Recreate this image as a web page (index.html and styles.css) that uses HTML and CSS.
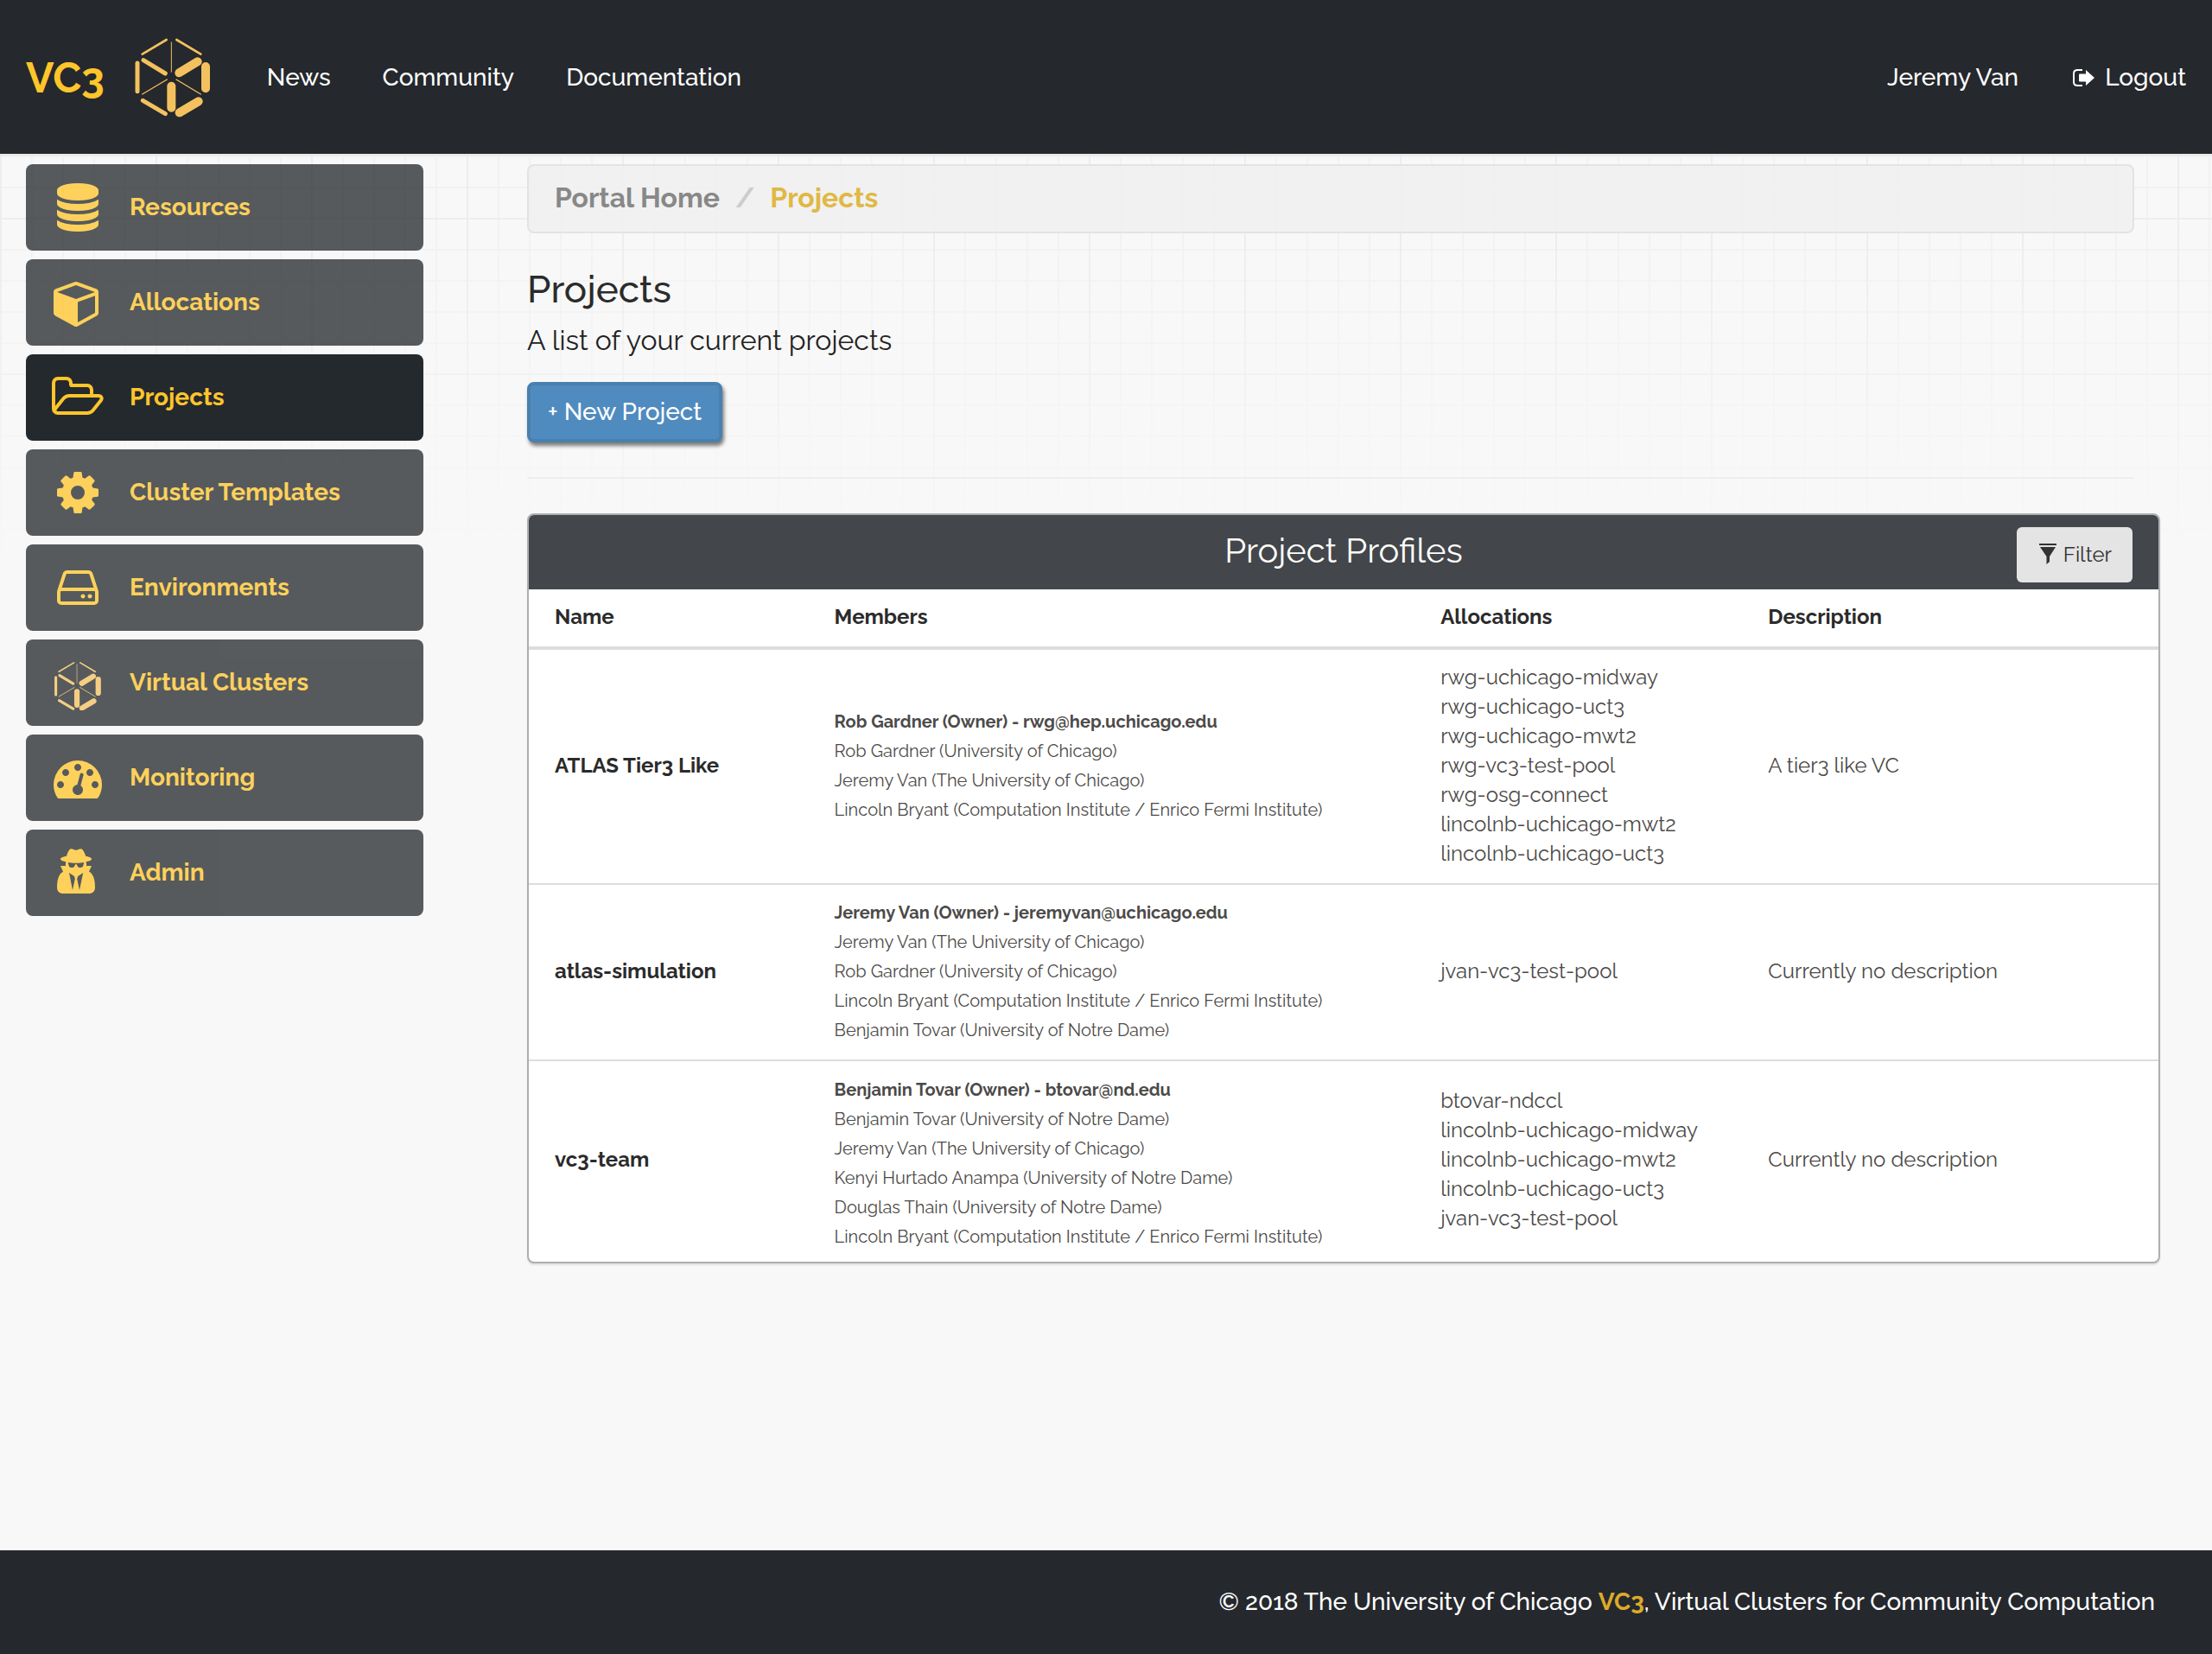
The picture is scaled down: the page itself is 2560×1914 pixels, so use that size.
FILE: index.html
```html
<!DOCTYPE html>
<html lang="en">
<head>
<meta charset="utf-8">
<meta name="viewport" content="width=device-width, initial-scale=1">
<title>VC3 - Projects</title>
<link rel="stylesheet" href="styles.css">
</head>
<body>
<svg class="sprite" aria-hidden="true">
  <defs>
    <g id="vc3-mark" fill="none" stroke="currentColor" stroke-linecap="round">
      <path stroke-width="8" d="M74 98L158 48M193 48L277 98"/>
      <path stroke-width="3" d="M175 57V160"/>
      <path stroke-width="4" d="M74 237L160 186M192 186L277 237"/>
      <path stroke-width="15" d="M57 129V227M78 119L154 165M76 259L154 305"/>
      <path stroke-width="30" d="M202 163L266 124M294 141V217M175 209V284M203 301L269 262"/>
    </g>
  </defs>
</svg>

<header class="topbar">
  <a class="brand" href="#">VC3
    <svg class="brand-logo" viewBox="45 42 270 276" aria-hidden="true"><use href="#vc3-mark"/></svg>
  </a>
  <nav class="topnav" aria-label="Main">
    <a href="#">News</a>
    <a href="#">Community</a>
    <a href="#">Documentation</a>
  </nav>
  <nav class="topnav topnav-user" aria-label="Account">
    <a href="#">Jeremy Van</a>
    <a class="logout" href="#">
      <svg class="logout-icon" viewBox="0 0 28 28" aria-hidden="true">
        <path d="M14 5H8.500Q4 5 4 9V19Q4 23 8.500 23H14" fill="none" stroke="currentColor" stroke-width="2"/>
        <path d="M10 10.500Q10 9.500 11 9.500H18V5L28 14L18 23V18.500H11Q10 18.500 10 17.500Z" fill="currentColor"/>
      </svg>
      Logout</a>
  </nav>
</header>

<div class="layout">
  <nav class="sidebar" aria-label="Portal">
    <a class="side-link" href="#">
      <svg viewBox="-128 -128 2048 2048" aria-hidden="true"><path d="M896 768q237 0 443-43t325-127v170q0 69-103 128t-280 93.500-385 34.500-385-34.500-280-93.500-103-128v-170q119 84 325 127t443 43zm0 768q237 0 443-43t325-127v170q0 69-103 128t-280 93.500-385 34.500-385-34.500-280-93.500-103-128v-170q119 84 325 127t443 43zm0-384q237 0 443-43t325-127v170q0 69-103 128t-280 93.500-385 34.500-385-34.500-280-93.500-103-128v-170q119 84 325 127t443 43zm0-1152q208 0 385 34.500t280 93.500 103 128v128q0 69-103 128t-280 93.500-385 34.500-385-34.500-280-93.500-103-128v-128q0-69 103-128t280-93.500 385-34.500z"/></svg>
      Resources</a>
    <a class="side-link" href="#">
      <svg viewBox="-128 -128 2048 2048" aria-hidden="true"><path d="M896 1629l640-349v-636l-640 233v752zm-64-865l698-254-698-254-698 254zm832-252v768q0 35-18 65t-49 47l-704 384q-28 16-61 16t-61-16l-704-384q-31-17-49-47t-18-65v-768q0-40 23-73t61-47l704-256q22-8 44-8t44 8l704 256q38 14 61 47t23 73z"/></svg>
      Allocations</a>
    <a class="side-link is-active" href="#" aria-current="page">
      <svg viewBox="0 -128 2048 2048" aria-hidden="true"><path d="M1845 931q0-35-53-35h-1088q-40 0-85.500 21.500t-71.500 52.500l-294 363q-18 24-18 40 0 35 53 35h1088q40 0 86-22t71-53l294-363q18-22 18-39zm-1141-163h768v-160q0-40-28-68t-68-28h-576q-40 0-68-28t-28-68v-64q0-40-28-68t-68-28h-320q-40 0-68 28t-28 68v853l256-315q44-53 116-87.500t140-34.500zm1269 163q0 62-46 120l-295 363q-43 53-116 87.500t-140 34.500h-1088q-92 0-158-66t-66-158v-960q0-92 66-158t158-66h320q92 0 158 66t66 158v32h544q92 0 158 66t66 158v160h192q54 0 99 24.500t67 70.500q15 32 15 68z"/></svg>
      Projects</a>
    <a class="side-link" href="#">
      <svg viewBox="-128 -128 2048 2048" aria-hidden="true"><path d="M1152 896q0-106-75-181t-181-75-181 75-75 181 75 181 181 75 181-75 75-181zm512-109v222q0 12-8 23t-20 13l-185 28q-19 54-39 91 35 50 107 138 10 12 10 25t-9 23q-27 37-99 108t-94 71q-12 0-26-9l-138-108q-44 23-91 38-16 136-29 186-7 28-36 28h-222q-14 0-24.500-8.500t-11.500-21.500l-28-184q-49-16-90-37l-141 107q-10 9-25 9-14 0-25-11-126-114-165-168-7-10-7-23 0-12 8-23 15-21 51-66.500t54-70.500q-27-50-41-99l-183-27q-13-2-21-12.500t-8-23.500v-222q0-12 8-23t19-13l186-28q14-46 39-92-40-57-107-138-10-12-10-24 0-10 9-23 26-36 98.500-107.500t94.500-71.500q13 0 26 10l138 107q44-23 91-38 16-136 29-186 7-28 36-28h222q14 0 24.500 8.500t11.500 21.500l28 184q49 16 90 37l142-107q9-9 24-9 13 0 25 10 129 119 165 170 7 8 7 22 0 12-8 23-15 21-51 66.500t-54 70.500q26 50 41 98l183 28q13 2 21 12.500t8 23.500z"/></svg>
      Cluster Templates</a>
    <a class="side-link" href="#">
      <svg viewBox="-128 -128 2048 2048" aria-hidden="true"><path d="M1168 1216q0 33-23.500 56.500t-56.500 23.500-56.500-23.500-23.500-56.500 23.500-56.500 56.500-23.500 56.500 23.500 23.500 56.500zm256 0q0 33-23.500 56.500t-56.500 23.500-56.500-23.500-23.500-56.500 23.500-56.500 56.500-23.500 56.500 23.500 23.500 56.500zm112 160v-320q0-13-9.500-22.500t-22.500-9.500h-1216q-13 0-22.500 9.500t-9.500 22.500v320q0 13 9.500 22.500t22.500 9.500h1216q13 0 22.500-9.500t9.500-22.500zm-1230-480h1180l-157-482q-4-13-16-21.500t-26-8.500h-782q-14 0-26 8.500t-16 21.500zm1358 160v320q0 66-47 113t-113 47h-1216q-66 0-113-47t-47-113v-320q0-25 16-75l197-606q17-53 63-86t101-33h782q55 0 101 33t63 86l197 606q16 50 16 75z"/></svg>
      Environments</a>
    <a class="side-link" href="#">
      <svg class="mark" viewBox="25 5 309 309" aria-hidden="true"><use href="#vc3-mark"/></svg>
      Virtual Clusters</a>
    <a class="side-link" href="#">
      <svg viewBox="-128 -128 2048 2048" aria-hidden="true"><path d="M384 1152q0-53-37.500-90.500t-90.500-37.500-90.500 37.500-37.500 90.500 37.500 90.500 90.500 37.500 90.500-37.500 37.500-90.500zm192-448q0-53-37.500-90.500t-90.500-37.500-90.500 37.500-37.500 90.500 37.500 90.500 90.500 37.500 90.500-37.500 37.500-90.500zm428 481l101-382q6-26-7.500-48.500t-38.500-29.500-48 6.500-30 39.500l-101 382q-60 5-107 43.500t-63 98.500q-20 77 20 146t117 89 146-20 89-117q16-60-6-117t-72-91zm660-33q0-53-37.500-90.500t-90.500-37.500-90.500 37.500-37.500 90.500 37.500 90.500 90.500 37.500 90.500-37.500 37.500-90.500zm-640-640q0-53-37.500-90.500t-90.500-37.500-90.500 37.500-37.500 90.500 37.500 90.500 90.500 37.500 90.500-37.500 37.500-90.500zm448 192q0-53-37.500-90.500t-90.500-37.500-90.500 37.500-37.500 90.500 37.500 90.500 90.500 37.500 90.500-37.500 37.500-90.500zm320 448q0 261-141 483-19 29-54 29h-1402q-35 0-54-29-141-221-141-483 0-182 71-348t191-286 286-191 348-71 348 71 286 191 191 286 71 348z"/></svg>
      Monitoring</a>
    <a class="side-link" href="#">
      <svg viewBox="-4 -4 64 64" aria-hidden="true"><path fill-rule="evenodd" d="M8 12C8 10 13 9 15 8.700C16 5 18 .3 20.300 .2C22.500 0 23.500 1.700 26 1.700C28.500 1.700 29.500 0 31.700 .2C34 .3 36 5 37.300 8.700C39 9 44 10 44 12C44 14 40 14.800 37.500 15.300C38 17 38.300 18.500 38 20H44L41 26.500C46 29 48 36 48 45C48 49.500 45 52 41 52H11C7 52 4 49.500 4 45C4 36 6 29 11 26.700L8 20H14C13.800 18.500 14 17 14.300 15.300C12 14.800 8 14 8 12ZM16.700 16L17.500 19C18 22 20 22 22 22C24 22 24.500 20 25 18.300H27C27.500 20 28 22 30 22C32 22 34 22 34.500 19L35.300 16C30 17 22 17 16.700 16ZM18 28L22 48L24.800 35L24 32ZM34.200 28L28.200 32L27.200 35L30 48Z"/></svg>
      Admin</a>
  </nav>

  <main class="content">
    <nav class="breadcrumb" aria-label="Breadcrumb">
      <a href="#">Portal Home</a>
      <span class="divider">/</span>
      <span class="current">Projects</span>
    </nav>

    <h1>Projects</h1>
    <p class="lead">A list of your current projects</p>
    <button class="btn-new" type="button">+ New Project</button>
    <hr>

    <section class="panel" aria-labelledby="profiles-title">
      <div class="panel-heading">
        <h2 id="profiles-title">Project Profiles</h2>
        <button class="btn-filter" type="button">
          <svg viewBox="0 0 24 24" aria-hidden="true"><path fill="currentColor" d="M2 0H22V2H2ZM3 4H21L14 15V21L10.500 24V15Z"/></svg>
          Filter</button>
      </div>
      <table>
        <colgroup><col class="col-name"><col class="col-members"><col class="col-alloc"><col></colgroup>
        <thead>
          <tr><th scope="col">Name</th><th scope="col">Members</th><th scope="col">Allocations</th><th scope="col">Description</th></tr>
        </thead>
        <tbody>
          <tr>
            <th scope="row"><a href="#">ATLAS Tier3 Like</a></th>
            <td class="members">
              <ul>
                <li class="owner">Rob Gardner (Owner) - rwg@hep.uchicago.edu</li>
                <li>Rob Gardner (University of Chicago)</li>
                <li>Jeremy Van (The University of Chicago)</li>
                <li>Lincoln Bryant (Computation Institute / Enrico Fermi Institute)</li>
              </ul>
            </td>
            <td>
              <ul>
                <li>rwg-uchicago-midway</li>
                <li>rwg-uchicago-uct3</li>
                <li>rwg-uchicago-mwt2</li>
                <li>rwg-vc3-test-pool</li>
                <li>rwg-osg-connect</li>
                <li>lincolnb-uchicago-mwt2</li>
                <li>lincolnb-uchicago-uct3</li>
              </ul>
            </td>
            <td>A tier3 like VC</td>
          </tr>
          <tr>
            <th scope="row"><a href="#">atlas-simulation</a></th>
            <td class="members">
              <ul>
                <li class="owner">Jeremy Van (Owner) - jeremyvan@uchicago.edu</li>
                <li>Jeremy Van (The University of Chicago)</li>
                <li>Rob Gardner (University of Chicago)</li>
                <li>Lincoln Bryant (Computation Institute / Enrico Fermi Institute)</li>
                <li>Benjamin Tovar (University of Notre Dame)</li>
              </ul>
            </td>
            <td>
              <ul>
                <li>jvan-vc3-test-pool</li>
              </ul>
            </td>
            <td>Currently no description</td>
          </tr>
          <tr>
            <th scope="row"><a href="#">vc3-team</a></th>
            <td class="members">
              <ul>
                <li class="owner">Benjamin Tovar (Owner) - btovar@nd.edu</li>
                <li>Benjamin Tovar (University of Notre Dame)</li>
                <li>Jeremy Van (The University of Chicago)</li>
                <li>Kenyi Hurtado Anampa (University of Notre Dame)</li>
                <li>Douglas Thain (University of Notre Dame)</li>
                <li>Lincoln Bryant (Computation Institute / Enrico Fermi Institute)</li>
              </ul>
            </td>
            <td>
              <ul>
                <li>btovar-ndccl</li>
                <li>lincolnb-uchicago-midway</li>
                <li>lincolnb-uchicago-mwt2</li>
                <li>lincolnb-uchicago-uct3</li>
                <li>jvan-vc3-test-pool</li>
              </ul>
            </td>
            <td>Currently no description</td>
          </tr>
        </tbody>
      </table>
    </section>
  </main>
</div>

<footer class="footer">
  <p>© 2018 The University of Chicago <a href="#">VC3</a>, Virtual Clusters for Community Computation</p>
</footer>
</body>
</html>
```
FILE: styles.css
```css
* {
  box-sizing: border-box;
}

body {
  margin: 0;
  min-height: 100vh;
  display: flex;
  flex-direction: column;
  font-family: Raleway, "Open Sans", sans-serif;
  font-size: 24px;
  line-height: 34px;
  color: #4c4a48;
  /* blueprint grid, fading out below the page heading */
  background-color: #f8f8f8;
  background-image:
    linear-gradient(rgba(248, 248, 248, 0) 260px, #f8f8f8 660px),
    linear-gradient(90deg, #ededed 2px, transparent 2px),
    linear-gradient(#ededed 2px, transparent 2px),
    linear-gradient(90deg, #f2f2f2 2px, transparent 2px),
    linear-gradient(#f2f2f2 2px, transparent 2px);
  background-size: 100% 100%, 180px 180px, 180px 180px, 36px 36px, 36px 36px;
  background-position: 0 0, 0 0, 0 72px, 0 0, 0 0;
}

a {
  color: inherit;
  text-decoration: none;
}

ul {
  list-style: none;
  margin: 0;
  padding: 0;
}

button {
  font-family: inherit;
  cursor: pointer;
}

.sprite {
  position: absolute;
  width: 0;
  height: 0;
}

/* top bar */

.topbar {
  display: flex;
  align-items: center;
  height: 180px;
  padding: 2px 30px 0;
  background: #25282d;
  border-bottom: 2px solid #e7e7e7;
  color: #fff;
}

.brand {
  display: flex;
  align-items: center;
  gap: 34px;
  margin-right: 64px;
  font-size: 48px;
  font-weight: 700;
  color: #ffc52b;
}

.brand-logo {
  width: 90px;
  height: 92px;
  color: #f3c15e;
}

.topnav {
  display: flex;
  gap: 60px;
  font-size: 28px;
  font-weight: 500;
}

.topnav-user {
  margin-left: auto;
}

.logout {
  display: flex;
  align-items: center;
  gap: 12px;
}

.logout-icon {
  width: 28px;
  height: 28px;
}

/* page layout */

.layout {
  flex: 1;
  display: grid;
  grid-template-columns: 460px minmax(0, 1fr);
  align-items: start;
  gap: 120px;
  padding: 10px 60px 60px 30px;
}

/* sidebar */

.sidebar {
  display: grid;
  gap: 10px;
}

.side-link {
  display: flex;
  align-items: center;
  gap: 28px;
  height: 100px;
  padding: 0 28px;
  border-radius: 8px;
  background: #24292d;
  color: #ffc52b;
  font-size: 28px;
  font-weight: 700;
  opacity: .76;
}

.side-link.is-active {
  opacity: 1;
}

.side-link svg {
  width: 64px;
  height: 64px;
  fill: currentColor;
}

.side-link .mark {
  color: #f3c15e;
}

/* content */

.breadcrumb {
  display: flex;
  align-items: center;
  height: 80px;
  margin-right: 30px;
  padding: 0 30px 2px;
  border: 2px solid #e3e3e3;
  border-radius: 8px;
  background: rgba(240, 240, 240, .85);
  font-size: 32px;
  font-weight: 700;
  color: #888;
}

.breadcrumb .divider {
  padding: 0 18px;
  color: #ccc;
}

.breadcrumb .current {
  color: #e0b844;
}

h1,
h2,
p {
  margin: 0;
}

h1 {
  margin-top: 40px;
  font-size: 44px;
  line-height: 50px;
  font-weight: 500;
  color: #2b2b2b;
}

.lead {
  margin-top: 16px;
  font-size: 32px;
  line-height: 36px;
  color: #222;
}

.btn-new {
  display: block;
  height: 70px;
  margin-top: 30px;
  padding: 0 20px 2px;
  border: 4px solid #4a80ae;
  border-radius: 8px;
  background: #508bbf;
  box-shadow: 2px 4px 4px rgba(0, 0, 0, .5);
  font-size: 28px;
  font-weight: 500;
  color: #fff;
}

hr {
  height: 2px;
  margin: 40px 30px 40px 0;
  border: 0;
  background: #eee;
}

/* project table */

.panel {
  overflow: hidden;
  border: 2px solid #aeafb0;
  border-radius: 8px;
  background: #fff;
  box-shadow: 0 2px 2px rgba(0, 0, 0, .1);
}

.panel-heading {
  display: grid;
  grid-template-columns: 1fr auto 1fr;
  align-items: start;
  height: 86px;
  padding: 14px 30px 8px;
  background: #43464b;
}

.panel-heading h2 {
  grid-column: 2;
  font-size: 40px;
  line-height: 54px;
  font-weight: 400;
  color: #fffffa;
}

.btn-filter {
  display: flex;
  align-items: center;
  justify-self: end;
  gap: 6px;
  height: 64px;
  padding: 0 24px 2px;
  border: 0;
  border-radius: 6px;
  background: #e4e4e4;
  font-size: 24px;
  color: #333;
}

.btn-filter svg {
  width: 24px;
  height: 24px;
}

table {
  width: 100%;
  table-layout: fixed;
  border-collapse: separate;
  border-spacing: 0;
}

.col-name {
  width: 17.9%;
}

.col-members {
  width: 37.2%;
}

.col-alloc {
  width: 20.1%;
}

th,
td {
  padding: 15px 16px 17px;
  text-align: left;
  vertical-align: middle;
}

th {
  font-weight: 700;
  color: #2b2b2b;
}

thead th {
  border-bottom: 4px solid #ddd;
}

th:first-child {
  padding-left: 30px;
}

tbody tr + tr > * {
  border-top: 2px solid #ddd;
}

tbody tr:last-child > * {
  padding-top: 12px;
}

tbody tr:last-child > .members {
  padding-top: 16px;
  padding-bottom: 12px;
}

.members {
  font-size: 20px;
}

.owner {
  font-weight: 700;
}

/* footer */

.footer {
  display: flex;
  align-items: center;
  justify-content: flex-end;
  height: 120px;
  padding: 0 66px;
  background: #25282d;
  font-size: 28px;
  font-weight: 500;
  color: #fff;
}

.footer a {
  font-weight: 700;
  color: #dbaa2b;
}
```
